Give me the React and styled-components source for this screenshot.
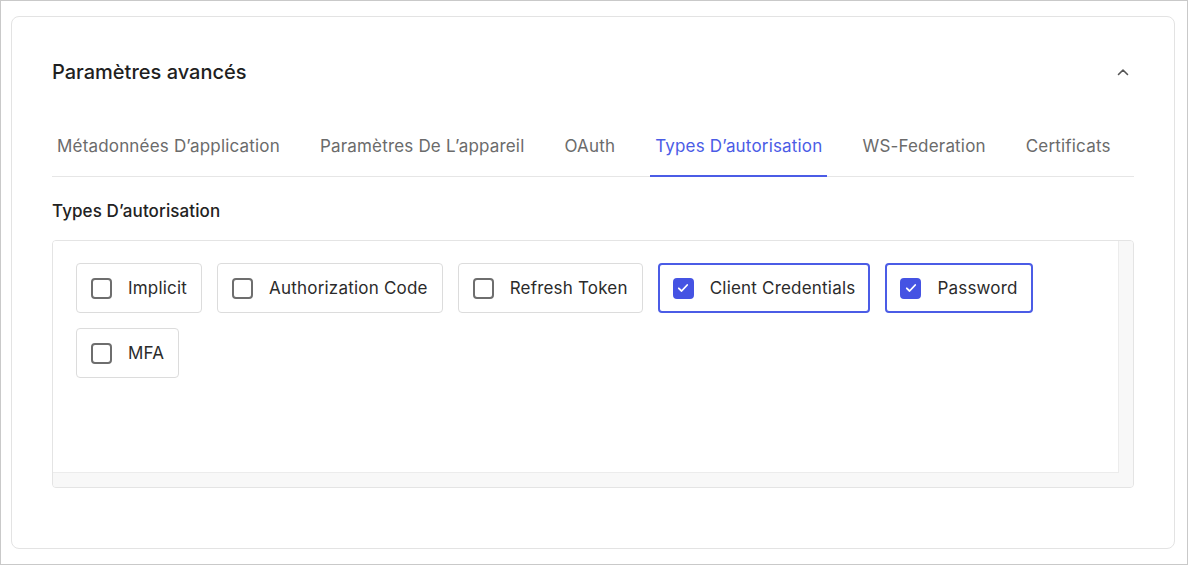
import React, { useState } from "react";
import styled, { createGlobalStyle } from "styled-components";

const GlobalStyle = createGlobalStyle`
  html, body {
    margin: 0;
    padding: 0;
    background: #ffffff;
  }
  * {
    box-sizing: border-box;
  }
  body {
    font-family: Inter, "Noto Sans", "Liberation Sans", sans-serif;
    color: #222;
  }
`;

const tabs = [
  "Métadonnées D’application",
  "Paramètres De L’appareil",
  "OAuth",
  "Types D’autorisation",
  "WS-Federation",
  "Certificats",
];

const grantTypes = [
  { label: "Implicit", checked: false },
  { label: "Authorization Code", checked: false },
  { label: "Refresh Token", checked: false },
  { label: "Client Credentials", checked: true },
  { label: "Password", checked: true },
  { label: "MFA", checked: false },
];

// advanced settings panel, grant types tab open
const App = () => {
  const [activeTab, setActiveTab] = useState(3);
  const [grants, setGrants] = useState(grantTypes);

  const toggle = (index) => {
    setGrants((grants) =>
      grants.map((grant, i) =>
        i === index ? { ...grant, checked: !grant.checked } : grant
      )
    );
  };

  return (
    <Frame>
      <GlobalStyle />
      <Card>
        <Header>
          <Title>Paramètres avancés</Title>
          <Collapse aria-label="Réduire">
            <svg width="14" height="14" viewBox="0 0 14 14" fill="none">
              <path
                d="M2.5 9.5L7 5L11.5 9.5"
                stroke="#555"
                strokeWidth="1.6"
                strokeLinecap="round"
                strokeLinejoin="round"
              />
            </svg>
          </Collapse>
        </Header>

        <TabBar>
          {tabs.map((tab, i) => (
            <Tab
              key={tab}
              $active={i === activeTab}
              onClick={() => setActiveTab(i)}
            >
              {tab}
            </Tab>
          ))}
        </TabBar>

        <SectionLabel>Types D’autorisation</SectionLabel>

        <ScrollBox>
          <ScrollContent>
            <Chips>
              {grants.map((grant, i) => (
                <Chip
                  key={grant.label}
                  $checked={grant.checked}
                  onClick={() => toggle(i)}
                >
                  <Box $checked={grant.checked}>
                    {grant.checked && (
                      <svg width="14" height="14" viewBox="0 0 14 14" fill="none">
                        <path
                          d="M2.8 7.3L5.6 10L11.2 4"
                          stroke="#fff"
                          strokeWidth="1.8"
                          strokeLinecap="round"
                          strokeLinejoin="round"
                        />
                      </svg>
                    )}
                  </Box>
                  {grant.label}
                </Chip>
              ))}
            </Chips>
          </ScrollContent>
          <TrackRight />
          <TrackBottom />
        </ScrollBox>
      </Card>
    </Frame>
  );
};

const Frame = styled.div`
  width: 1188px;
  height: 565px;
  border: 1px solid #c9c9c9;
  padding: 15px 12px 15px 10px;
  display: flex;
`;

const Card = styled.div`
  flex: 1;
  border: 1px solid #e3e3e3;
  border-radius: 8px;
  padding: 43px 40px 0 40px;
  display: flex;
  flex-direction: column;
`;

const Header = styled.div`
  display: flex;
  align-items: center;
  justify-content: space-between;
  height: 24px;
`;

const Title = styled.div`
  font-size: 20px;
  font-weight: 500;
  color: #1f1f1f;
  line-height: 24px;
`;

const Collapse = styled.button`
  border: none;
  background: transparent;
  padding: 0;
  margin-right: 4px;
  display: flex;
  cursor: pointer;
`;

const TabBar = styled.div`
  display: flex;
  gap: 30px;
  margin-top: 41px;
  border-bottom: 1px solid #e6e6e6;
`;

const Tab = styled.div`
  padding: 10px 5px 18px;
  font-size: 17px;
  line-height: 22px;
  letter-spacing: 0.18px;
  color: ${(p) => (p.$active ? "#4b5ce6" : "#6b6b6b")};
  border-bottom: 2px solid ${(p) => (p.$active ? "#4b5ce6" : "transparent")};
  margin-bottom: -1px;
  cursor: pointer;
  white-space: nowrap;
`;

const SectionLabel = styled.div`
  margin-top: 23px;
  font-size: 17px;
  line-height: 22px;
  font-weight: 500;
  letter-spacing: 0.1px;
  color: #222;
`;

const ScrollBox = styled.div`
  margin-top: 18px;
  height: 248px;
  border: 1px solid #e4e4e4;
  border-radius: 4px;
  background: #f8f8f8;
  display: grid;
  grid-template-columns: 1fr 14px;
  grid-template-rows: 1fr 14px;
  overflow: hidden;
`;

const ScrollContent = styled.div`
  background: #ffffff;
  border-right: 1px solid #ececec;
  border-bottom: 1px solid #ececec;
  padding: 22px 23px;
`;

const TrackRight = styled.div`
  background: #f8f8f8;
`;

const TrackBottom = styled.div`
  grid-column: 1 / span 2;
  background: #f8f8f8;
`;

const Chips = styled.div`
  display: flex;
  flex-wrap: wrap;
  gap: 15px;
`;

const Chip = styled.label`
  display: flex;
  align-items: center;
  gap: 16px;
  height: 50px;
  padding: 0 ${(p) => (p.$checked ? "13px" : "14px")};
  border: ${(p) => (p.$checked ? "2px solid #4b5ce6" : "1px solid #dcdcdc")};
  border-radius: 4px;
  font-size: 17px;
  letter-spacing: 0.2px;
  color: #2b2b2b;
  cursor: pointer;
  user-select: none;
`;

const Box = styled.span`
  width: 21px;
  height: 21px;
  border-radius: 4px;
  border: 2px solid ${(p) => (p.$checked ? "#4553e3" : "#6e6e6e")};
  background: ${(p) => (p.$checked ? "#4553e3" : "#fff")};
  display: flex;
  align-items: center;
  justify-content: center;
  flex-shrink: 0;
`;

export default App;
